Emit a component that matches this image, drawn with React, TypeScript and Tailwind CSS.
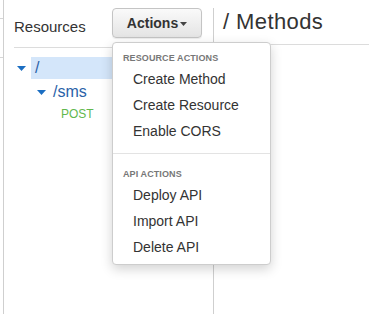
import { ReactNode } from "react"

function Caret({ className }: { className: string }) {
    return (
        <svg className={className} viewBox="0 0 9 5" width="9" height="5">
            <path d="M0 0 L9 0 L4.5 5 Z" fill="currentColor" />
        </svg>
    )
}

function MenuHeader({ children, className }: { children: ReactNode; className?: string }) {
    return (
        <div className={`h-[16px] pl-[10px] text-[9px] leading-[16px] font-bold tracking-[0.1px] text-[#777] uppercase ${className ?? ""}`}>
            {children}
        </div>
    )
}

function MenuItem({ children }: { children: ReactNode }) {
    return <div className="h-[26px] pl-[20px] text-[14px] leading-[26px] text-[#333]">{children}</div>
}

function App() {
    return (
        <div className="relative flex h-[314px] w-[369px] overflow-hidden bg-white font-['Liberation_Sans',Arial,sans-serif]">
            {/* cut-off edge on the far left */}
            <div className="flex w-[3px] flex-col">
                <div className="h-[19px] border-b border-[#d6d6d6]" />
                <div className="h-[39px] border-b border-[#d6d6d6]" />
            </div>

            {/* resources panel */}
            <div className="w-[210px] border-l border-[#cfcfcf] pr-[11px] pl-[10px]">
                <div className="flex h-[48px] items-start border-b border-[#dcdcdc]">
                    <div className="mt-[18px] text-[15px] leading-[18px] text-[#333]">Resources</div>
                    <button className="mt-[8px] ml-auto flex h-[30px] w-[90px] items-center justify-center gap-[2px] rounded-[4px] border border-[#c4c4c4] bg-gradient-to-b from-[#fafafa] to-[#e4e4e4] text-[14px] font-bold text-[#333] shadow-[0_1px_1px_rgba(0,0,0,0.08)]">
                        Actions
                        <svg viewBox="0 0 7 4" width="7" height="4" className="mt-[1px] text-[#444]">
                            <path d="M0 0 L7 0 L3.5 4 Z" fill="currentColor" />
                        </svg>
                    </button>
                </div>

                <div className="mt-[9px] -mr-[11px]">
                    <div className="flex h-[22px] items-center">
                        <Caret className="ml-[3px] text-[#1b6ec2]" />
                        <div className="ml-[5px] flex h-full flex-1 items-center bg-[#d4e6fa] pl-[4px] text-[16px] text-[#2a62a8]">/</div>
                    </div>
                    <div className="flex h-[24px] items-center pt-[2px]">
                        <Caret className="ml-[23px] text-[#1b6ec2]" />
                        <div className="ml-[7px] text-[16px] text-[#2a62a8]">/sms</div>
                    </div>
                    <div className="flex h-[22px] items-center">
                        <div className="ml-[47px] text-[12px] text-[#62b84e]">POST</div>
                    </div>
                </div>
            </div>

            {/* methods panel */}
            <div className="mt-[8px] flex-1 border-l border-[#cfcfcf]">
                <div className="h-[37px] border-b border-[#dcdcdc] pt-[1px] pl-[9px] text-[22px] leading-[26px] tracking-[0.4px] text-[#333]">
                    / Methods
                </div>
            </div>

            {/* actions dropdown */}
            <div className="absolute top-[42px] left-[112px] h-[223px] w-[159px] rounded-[4px] border border-[#cdcdcd] bg-white pt-[7px] shadow-[0_4px_12px_rgba(0,0,0,0.18)]">
                <MenuHeader>Resource Actions</MenuHeader>
                <MenuItem>Create Method</MenuItem>
                <MenuItem>Create Resource</MenuItem>
                <MenuItem>Enable CORS</MenuItem>
                <div className="mt-[9px] border-t border-[#e3e3e3]" />
                <MenuHeader className="mt-[12px]">API Actions</MenuHeader>
                <MenuItem>Deploy API</MenuItem>
                <MenuItem>Import API</MenuItem>
                <MenuItem>Delete API</MenuItem>
            </div>
        </div>
    )
}

export default App
